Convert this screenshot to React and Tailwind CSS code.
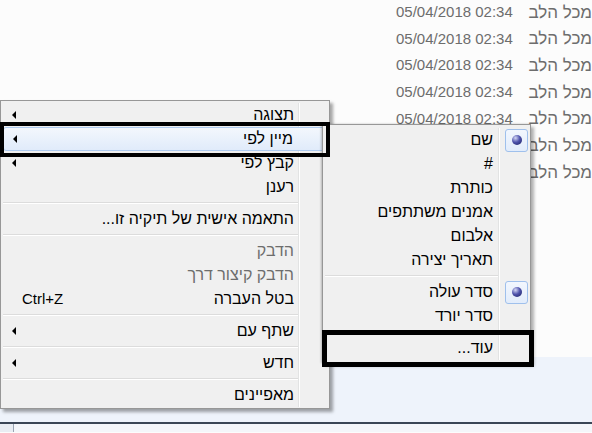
import React from 'react';

const rows = [true, true, true, true, true, false, false];

const mainItems = [
    { t: 'תצוגה', arrow: true },
    { t: 'מיין לפי', arrow: true, hot: true },
    { t: 'קבץ לפי', arrow: true },
    { t: 'רענן' },
    'sep',
    { t: 'התאמה אישית של תיקיה זו...' },
    'sep',
    { t: 'הדבק', off: true },
    { t: 'הדבק קיצור דרך', off: true },
    { t: 'בטל העברה', key: 'Ctrl+Z' },
    'sep',
    { t: 'שתף עם', arrow: true },
    'sep',
    { t: 'חדש', arrow: true },
    'sep',
    { t: 'מאפיינים' },
];

const sortItems = [
    { t: 'שם', dot: true },
    { t: '#' },
    { t: 'כותרת' },
    { t: 'אמנים משתתפים' },
    { t: 'אלבום' },
    { t: 'תאריך יצירה' },
    'sep',
    { t: 'סדר עולה', dot: true },
    { t: 'סדר יורד' },
    'sep',
    { t: 'עוד...' },
];

function Arrow() {
    return <span className="ml-[9px] w-0 h-0 border-y-[4px] border-y-transparent border-r-[4px] border-r-black" />;
}

function Separator({ gutter }) {
    return (
        <div className="flex h-[8px] items-center">
            <div className={`${gutter} self-stretch border-l border-[#e2e3e3] shadow-[inset_1px_0_0_#ffffff]`} />
            <div className="flex-1 h-[2px] border-t border-[#dcdcdc] border-b border-b-white" />
        </div>
    );
}

function Item({ item, gutter, pad }) {
    return (
        <div
            className={`flex h-[24px] ${item.hot
                ? 'rounded-[3px] border border-[#aecbf0] bg-gradient-to-b from-[#f3f7fd] to-[#e0ebfa]'
                : ''
                }`}
        >
            <div
                className={`${gutter} flex items-center justify-start ${item.hot ? '' : 'border-l border-[#e2e3e3] shadow-[inset_1px_0_0_#ffffff]'
                    }`}
            >
                {item.dot && (
                    <span className="w-[23px] h-[23px] rounded-[3px] border border-[#9fc0ec] bg-gradient-to-b from-[#f2f7fe] to-[#e2ecfb] flex items-center justify-center">
                        <span className="w-[10px] h-[10px] rounded-full bg-[radial-gradient(circle_at_35%_30%,#d4d7f6,#4f54ac_45%,#171b5e)]" />
                    </span>
                )}
            </div>
            <div className={`flex-1 flex items-center justify-between ${pad}`}>
                <span className={`whitespace-nowrap text-[16px] ${item.off ? 'text-[#6d6d6d]' : 'text-black'}`}>{item.t}</span>
                {item.arrow && <Arrow />}
                {item.key && (
                    <span dir="ltr" className="ml-[19px] text-black">
                        {item.key}
                    </span>
                )}
            </div>
        </div>
    );
}

export default function App() {
    return (
        <div className="relative w-[592px] h-[433px] overflow-hidden bg-[#fcfcfc] font-['Liberation_Sans','DejaVu_Sans',sans-serif] text-[15px]">
            {/* File list */}
            <div className="h-[358px] -mt-px">
                {rows.map((showDate, i) => (
                    <div key={i} className="flex items-center h-[26.67px] text-[#6d6d6d] whitespace-nowrap">
                        <span className="ml-[396px] w-[137px]">{showDate ? '05/04/2018 02:34' : ''}</span>
                        <span dir="rtl" className="text-[17px]">מכל הלב</span>
                    </div>
                ))}
            </div>
            <div className="h-[65px] bg-[#eef3fb]" />
            <div className="h-[2px] bg-[#3b4656]" />
            <div className="h-[8px] bg-[#f4f6fa] flex">
                <div className="w-[14px] border-r border-[#9aa4b2] bg-[#e9edf3]" />
            </div>

            {/* Context menu */}
            <div
                dir="rtl"
                className="absolute z-10 left-0 top-[100px] w-[330px] h-[309px] border border-[#979797] bg-[#f0f0f0] pt-[2px] px-[2px] shadow-[3px_3px_3px_rgba(0,0,0,0.35)]"
            >
                {mainItems.map((item, i) =>
                    item === 'sep' ? (
                        <Separator key={i} gutter="w-[29px]" />
                    ) : (
                        <Item key={i} item={item} gutter="w-[29px]" pad="pr-[4px]" />
                    )
                )}
            </div>

            {/* Sort-by submenu */}
            <div
                dir="rtl"
                className="absolute z-20 left-[322px] top-[124px] w-[209px] h-[239px] border border-[#979797] bg-[#f0f0f0] pt-[3px] px-[2px] shadow-[3px_3px_3px_rgba(0,0,0,0.3),-1px_0_2px_rgba(0,0,0,0.25)]"
            >
                {sortItems.map((item, i) =>
                    item === 'sep' ? (
                        <Separator key={i} gutter="w-[30px]" />
                    ) : (
                        <Item key={i} item={item} gutter="w-[30px]" pad="pr-[5px]" />
                    )
                )}
            </div>

            {/* Annotation boxes */}
            <div className="absolute z-30 left-0 top-[122px] w-[330px] h-[35px] border-4 border-black" />
            <div className="absolute z-30 left-[322px] top-[330px] w-[212px] h-[37px] border-[5px] border-black" />
        </div>
    );
}
